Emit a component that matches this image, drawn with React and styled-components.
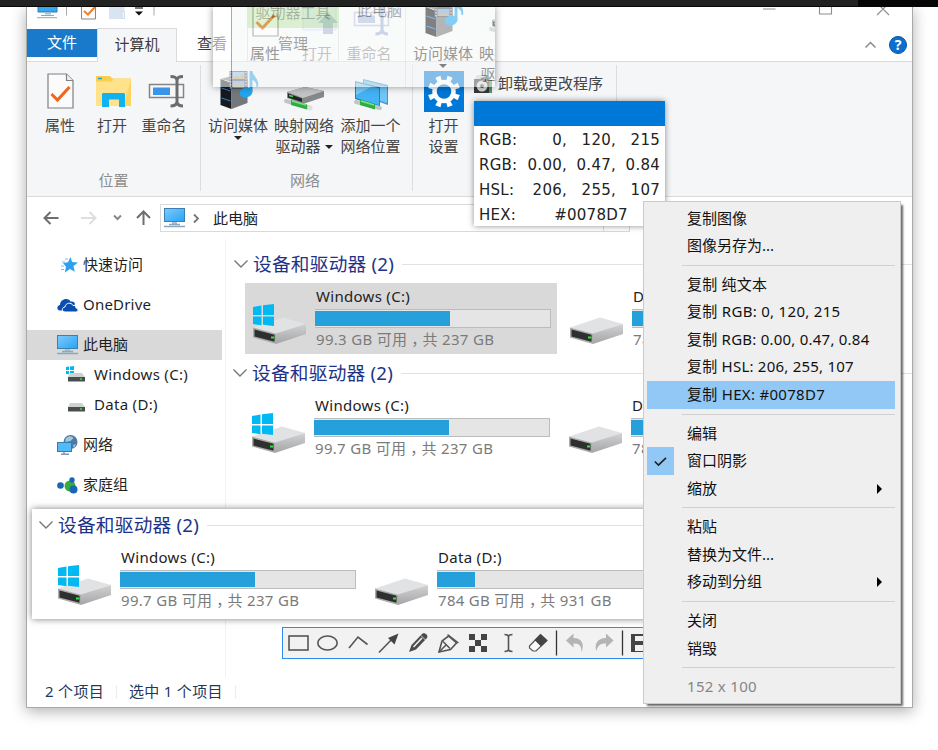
import React from "react";
import styled, { createGlobalStyle } from "styled-components";

const Global = createGlobalStyle`
  *, *::before, *::after { box-sizing: border-box; }
  html, body { margin: 0; height: 750px; overflow: hidden; background: #fff; }
  body { font: 15px/20px "Noto Sans", "Noto Sans CJK SC", sans-serif; color: #1f1f1f; }
  svg { display: block; flex: none; overflow: visible; }
`;

/* ---------- page and window frame ---------- */
const Page = styled.div`
  position: relative;
  width: 938px;
  height: 750px;
  overflow: hidden;
`;
const TopStrip = styled.div`
  position: relative;
  z-index: 2;
  height: 7px;
  display: flex;
  justify-content: flex-end;
  background: #222;
  border-bottom: 1px solid #060606;
`;
const TopStripEnd = styled.div`
  width: 80px;
  background: #060606;
`;
const Window = styled.div`
  display: flex;
  flex-direction: column;
  width: 887px;
  height: 701px;
  margin-left: 26px;
  background: #fff;
  border: 1px solid #a9a9a9;
  border-top: 0;
  box-shadow: 0 3px 14px rgba(0, 0, 0, 0.32);
`;

/* ---------- title and tabs ---------- */
const TitleBar = styled.div`
  display: flex;
  align-items: flex-start;
  height: 21px;
  flex: none;
`;
const QuickBar = styled.div`
  display: flex;
  width: 220px;
  height: 21px;
  padding-left: 10px;
`;
const ContextTitle = styled.div`
  width: 92px;
  height: 21px;
  background: #bfe9a4;
  color: #4c6b38;
  text-align: center;
  line-height: 10px;
`;
const WindowTitle = styled.div`
  margin-left: 18px;
  line-height: 7px;
  color: #555;
  flex: 1;
`;
const Controls = styled.div`
  width: 150px;
`;
const Tabs = styled.div`
  display: flex;
  height: 34px;
  flex: none;
  border-bottom: 1px solid #dadbdc;
`;
const Tab = styled.div`
  width: ${(p) => p.$w}px;
  height: 34px;
  text-align: center;
  line-height: 30px;
  color: #3c3c3c;
`;
const FileTab = styled(Tab)`
  height: 28px;
  margin-top: 1px;
  line-height: 27px;
  background: #1979ca;
  color: #fff;
`;
const ActiveTab = styled(Tab)`
  background: #f5f6f7;
  border: 1px solid #dadbdc;
  border-bottom: 0;
`;
const ManageTab = styled(Tab)`
  border: 1px solid #dfdfdf;
  border-width: 0 1px;
`;
const TabTools = styled.div`
  display: flex;
  align-items: center;
  gap: 13px;
  margin: 0 5px 0 auto;
`;

/* ---------- ribbon ---------- */
const Ribbon = styled.div`
  display: flex;
  height: 135px;
  flex: none;
  background: #f5f6f7;
  border-bottom: 1px solid #dadbdc;
`;
const Group = styled.div`
  display: flex;
  flex-direction: column;
  width: ${(p) => p.$w}px;
  margin: 3px 0 5px;
  padding: 5px 0 0 ${(p) => p.$pad}px;
  border-right: 1px solid #dcdddf;
`;
const GroupRow = styled.div`
  display: flex;
  flex: 1;
`;
const GroupLabel = styled.div`
  height: 22px;
  line-height: 23px;
  text-align: center;
  color: #8d8d8d;
  margin-left: -${(p) => p.$back}px;
`;
const BigButton = styled.div`
  display: flex;
  flex-direction: column;
  align-items: center;
  width: ${(p) => p.$w}px;
  line-height: 21px;
  color: #444;
  white-space: nowrap;
  opacity: ${(p) => (p.$off ? 0.55 : 1)};
`;
const IconBox = styled.div`
  display: flex;
  justify-content: center;
  height: 45px;
`;
const LabelLine = styled.div`
  display: flex;
  align-items: center;
  gap: 4px;
  height: 21px;
`;
const Caret = styled.span`
  border: 4px solid transparent;
  border-top-color: #222;
  border-bottom: 0;
`;
const SmallButton = styled.div`
  display: flex;
  align-items: center;
  gap: 5px;
  height: 28px;
  margin-left: 4px;
  color: #444;
  white-space: nowrap;
`;
const SmallText = styled.span`
  padding-bottom: 2px;
`;

/* ---------- navigation row ---------- */
const NavRow = styled.div`
  display: flex;
  align-items: center;
  height: 43px;
  padding-bottom: 1px;
  flex: none;
`;
const NavButtons = styled.div`
  width: 133px;
`;
const Address = styled.div`
  display: flex;
  align-items: center;
  width: 470px;
  height: 28px;
  padding-left: 3px;
  border: 1px solid #d9d9d9;
  color: #222;
`;
const Crumb = styled.div`
  margin: 0 14px 0 9px;
`;
const AddressText = styled.span`
  padding-bottom: 1px;
  flex: 1;
`;
const RefreshCell = styled.div`
  width: 26px;
  height: 26px;
  border-left: 1px solid #d9d9d9;
`;

/* ---------- body ---------- */
const Body = styled.div`
  display: flex;
  flex: 1;
`;
const Sidebar = styled.div`
  width: 199px;
  padding: 10px 3px 0 0;
  border-right: 1px solid #f1f1f1;
`;
const SideItem = styled.div`
  display: flex;
  align-items: center;
  height: 30px;
  margin-bottom: ${(p) => p.$gap || 0}px;
  padding-left: ${(p) => (p.$nested ? 39 : 30)}px;
  background: ${(p) => (p.$selected ? "#d9d9d9" : "transparent")};
  letter-spacing: ${(p) => p.$ls || 0}px;
  white-space: nowrap;
`;
const SideIcon = styled.div`
  width: ${(p) => (p.$nested ? 28 : 26)}px;
  padding-left: ${(p) => p.$inset || 0}px;
`;
const SideText = styled.span`
  padding-bottom: 2px;
`;
const Main = styled.div`
  flex: 1;
  min-width: 0;
  padding-top: 5px;
  overflow: hidden;
`;
const Section = styled.div`
  margin-left: ${(p) => (p.$shift ? -1 : 0)}px;
`;
const SectionHead = styled.div`
  display: flex;
  align-items: center;
  height: 38px;
  padding-left: 8px;
  color: #1e3287;
  font-size: 18.7px;
  white-space: nowrap;
`;
const SectionName = styled.span`
  margin: 0 8px 1px 5px;
  letter-spacing: 0.22px;
`;
const Rule = styled.div`
  flex: 1;
  height: 1px;
  margin-top: 1px;
  background: #e2e2e2;
`;
const Cards = styled.div`
  display: flex;
  gap: 5px;
  padding-left: 19px;
`;
const Card = styled.div`
  display: flex;
  flex: none;
  width: 312px;
  height: 71px;
  padding: 4px 6px 0 8px;
  background: ${(p) => (p.$selected ? "#d9d9d9" : "transparent")};
`;
const DriveArt = styled.div`
  width: 62px;
  padding-top: 17px;
`;
const DriveInfo = styled.div`
  width: 236px;
  white-space: nowrap;
`;
const DriveName = styled.div`
  height: 22px;
  padding-left: 1px;
  line-height: 18px;
  letter-spacing: 0.3px;
  color: #222;
`;
const Meter = styled.div`
  height: 19px;
  padding: 1px 1px 1px 0;
  background: #e5e5e5;
  border: 1px solid #bcbcbc;
  border-left-width: 0;
`;
const MeterFill = styled.div`
  height: 100%;
  background: #26a0da;
`;
const DriveSpace = styled.div`
  height: 24px;
  padding-left: 1px;
  line-height: 22px;
  letter-spacing: 0.3px;
  color: #7b7b7b;
`;
const Comma = styled.span`
  margin: 0 -4px 0 4px;
`;
const Status = styled.div`
  display: flex;
  align-items: center;
  height: 30px;
  flex: none;
  padding-left: 18px;
  color: #1e395b;
`;
const StatusItem = styled.div`
  height: 14px;
  line-height: 12px;
  letter-spacing: 0.3px;
  padding-right: 12px;
  margin-right: 12px;
  border-right: 1px solid #ececec;
`;

/* ---------- floating pieces ---------- */
const Snippet = styled.div`
  position: absolute;
  left: 32px;
  top: 509px;
  width: 640px;
  height: 110px;
  background: #fff;
  box-shadow: 0 0 7px rgba(0, 0, 0, 0.5);
`;
const SnippetInner = styled.div`
  height: 110px;
  overflow: hidden;
`;
const SnippetBody = styled.div`
  margin-top: -3px;
`;
const Ghost = styled.div`
  position: absolute;
  left: 213px;
  top: 7px;
  width: 282px;
  height: 80px;
  opacity: 0.55;
  background: #fff;
  box-shadow: 0 0 7px rgba(0, 0, 0, 0.75);
`;
const GhostClip = styled.div`
  height: 80px;
  padding-left: 18px;
  overflow: hidden;
`;
const GhostRibbon = styled(Ribbon)`
  width: 640px;
  margin-top: -17px;
  border-left: 1px solid #1979ca;
`;
const Tip = styled.div`
  position: absolute;
  left: 474px;
  top: 101px;
  width: 191px;
  height: 125px;
  background: #fff;
  box-shadow: 0 0 6px rgba(0, 0, 0, 0.45);
  font: 15px/25px "DejaVu Sans", sans-serif;
  color: #222;
`;
const Swatch = styled.div`
  height: 26px;
  border-bottom: 1px solid #fff;
  background: #0078d7;
`;
const TipRow = styled.div`
  display: grid;
  grid-template-columns: 43px 45px 49px 44px;
  height: 25px;
  padding: 0 0 0 5px;
  line-height: 26px;
  text-align: right;
  letter-spacing: 0.25px;
`;
const TipKey = styled.span`
  text-align: left;
`;
const TipWide = styled.span`
  grid-column: 2 / 5;
  text-align: center;
`;
const Tools = styled.div`
  position: absolute;
  left: 282px;
  top: 627px;
  width: 380px;
  height: 32px;
  background: #f2f2f2;
  border: 1px solid #2e8bef;
`;
const Menu = styled.div`
  position: absolute;
  left: 643px;
  top: 201px;
  width: 258px;
  height: 503px;
  padding: 3px 5px 0 3px;
  background: #efefef;
  border: 1px solid #cacaca;
  box-shadow: 3px 3px 2px -1px rgba(0, 0, 0, 0.6);
  color: #111;
  overflow: hidden;
`;
const MenuItem = styled.div`
  display: flex;
  align-items: center;
  height: 27.5px;
  background: ${(p) => (p.$hot ? "#91c8f6" : "transparent")};
  color: ${(p) => (p.$dim ? "#868686" : "inherit")};
  letter-spacing: ${(p) => p.$ls || 0}px;
  white-space: nowrap;
`;
const MenuGutter = styled.div`
  display: flex;
  align-items: center;
  justify-content: center;
  width: 27px;
  height: 27.5px;
  margin-right: 13px;
  background: ${(p) => (p.$on ? "#91c8f6" : "transparent")};
`;
const MenuText = styled.span`
  flex: 1;
  padding-bottom: 2px;
`;
const SubArrow = styled.span`
  margin-right: 13px;
  border: 5px solid transparent;
  border-left-color: #000;
  border-right: 0;
`;
const MenuRule = styled.div`
  height: 1px;
  margin: 5px 0 5.2px 35px;
  background: #d0d0d0;
`;

/* ---------- icons ---------- */
const Monitor = () => (
  <svg width="21" height="20" viewBox="0 0 21 20">
    <defs>
      <linearGradient id="scr" x1="0" y1="0" x2="1" y2="1">
        <stop offset="0" stopColor="#7ecbfb" />
        <stop offset="1" stopColor="#27a3f5" />
      </linearGradient>
    </defs>
    <rect x=".5" y=".5" width="20" height="13" fill="url(#scr)" stroke="#3a80b0" />
    <path d="M8 14h5v2H8z" fill="#a9c0d0" />
    <path d="M5 16.500h11M0 18.500h21" stroke="#8ba8bd" strokeWidth="1.300" />
  </svg>
);

const CheckDoc = () => (
  <svg width="27" height="36" viewBox="0 0 27 36">
    <path d="M1 1h18.500l6.500 6.500V35H1z" fill="#fbfbfb" stroke="#808080" strokeWidth="1.200" />
    <path d="M19.500 1v6.500H26" fill="#eee" stroke="#808080" strokeWidth="1.200" />
    <path d="M4.500 21l6 6L22.500 14" fill="none" stroke="#f2641d" strokeWidth="3" />
  </svg>
);

const Folder = () => (
  <svg width="35" height="31" viewBox="0 0 35 31">
    <path d="M0 3l0-3h14l2.500 2.500H35V30H0z" fill="#f8cf4f" />
    <path d="M0 5.500h15L17.500 3H35v27H0z" fill="#ffe28a" />
    <path d="M35 3v27h-7z" fill="#fbcf4d" opacity=".7" />
    <path d="M2 2.500h4" stroke="#2b9fd8" strokeWidth="1.500" />
    <path d="M6 31V18l1-1h21l1 1v13h-6v-7.500H13V31z" fill="#12b2ee" />
  </svg>
);

const OpenUp = () => (
  <svg width="36" height="34" viewBox="0 0 36 34">
    <path d="M0 2h12l3 3h18v25H0z" fill="#dfe8f6" stroke="#b4c4dd" />
    <path d="M25 12l10 11h-5v11H20V23h-5z" fill="#6b87b4" />
  </svg>
);

const Rename = ({ muted }) => (
  <svg width="36" height="34" viewBox="0 0 36 34">
    <rect x="1" y="10.500" width="34" height="13" fill="#f7f7f7" stroke={muted ? "#7e9ac8" : "#858585"} strokeWidth="1.500" />
    <rect x="4.500" y="13.500" width="17" height="7.500" fill={muted ? "#6f8ec4" : "#3a95ea"} />
    <path d="M22 2.500c4 0 6 .5 6.500 4 .5-3.500 2-4 6-4M28.500 5v24M22 32c4 0 6-1 6.500-4 .5 3 2.500 4 6 4" fill="none" stroke={muted ? "#5f7cae" : "#6c6c6c"} strokeWidth="3" />
  </svg>
);

const Media = () => (
  <svg width="39" height="38" viewBox="0 0 39 38">
    <path d="M1 8l15-4 12 4-11 4z" fill="#777" />
    <path d="M1 8l11 4v26L1 34z" fill="#17191c" />
    <path d="M12 12l16-4v24l-16 6z" fill="#74777b" />
    <path d="M2 17l9 3M2 27l9 3" stroke="#247bd1" strokeWidth="1.200" />
    <rect x="10" y="0" width="18" height="18" fill="#505962" />
    <rect x="13" y="1" width="12" height="7" fill="#8fbfe8" />
    <rect x="13" y="10" width="12" height="7" fill="#7da7dc" />
    <path d="M13 8l4-4 3 3 3-4 2 5zM13 17l4-4 3 3 3-2 2 3z" fill="#c8a35b" />
    <path d="M11.500 1v17M26.500 1v17" stroke="#e8edf2" strokeDasharray="1.500 1.500" />
    <ellipse cx="26.500" cy="21.500" rx="6.500" ry="5" fill="#21a7ee" transform="rotate(-15 26.500 21.500)" />
    <path d="M30 21V0h3c0 5 7 7 5.500 16h-1.500c0-4-1.500-6-4-7v12z" fill="#2ba5ea" />
  </svg>
);

const NetDrive = () => (
  <svg width="40" height="24" viewBox="0 0 40 24">
    <path d="M2 5L20 0l19 4v6L18 17 2 11z" fill="#858789" />
    <path d="M2 5L20 0l19 4-21 7z" fill="#c2c4c5" />
    <path d="M3 6.500l14 5V15L3 10.500z" fill="#222" />
    <path d="M4 8.500l4 1" stroke="#46db55" strokeWidth="1.500" />
    <path d="M1 14l7 2 17 5" stroke="#bfc7c4" strokeWidth="4" strokeLinecap="round" />
    <path d="M6 13l16 4.500v5L6 18z" fill="#2dad43" />
    <path d="M7 14l14 4" stroke="#80df86" strokeWidth="1.500" />
    <circle cx="25" cy="21" r="2.500" fill="#dde2df" />
  </svg>
);

const NetPlace = () => (
  <svg width="35" height="31" viewBox="0 0 35 31">
    <path d="M9 0l25 6v20L9 17z" fill="#3d94c8" />
    <path d="M10 1.500l23 5.700v17L10 16z" fill="#71c6f4" />
    <path d="M1 2l25 6v20L1 20z" fill="#2d7fae" />
    <path d="M2 3.500l23 5.700v17L2 19z" fill="#43b3f5" />
    <path d="M2 3.500l16 4L2 16z" fill="#7accf8" />
    <path d="M2 23l24 6" stroke="#bfc7c4" strokeWidth="4" strokeLinecap="round" />
    <path d="M6 20.500l15 4.500v5.500L6 26z" fill="#2dad43" />
    <path d="M7 22l13 4" stroke="#80df86" strokeWidth="1.500" />
  </svg>
);

const teeth = [22.5, 67.5, 112.5, 157.5, 202.5, 247.5, 292.5, 337.5];
const Gear = () => (
  <svg width="40" height="41" viewBox="0 0 40 41">
    <rect width="40" height="41" fill="#0078d7" />
    <circle cx="20" cy="20.500" r="9.500" fill="none" stroke="#fff" strokeWidth="4.500" />
    {teeth.map((a) => (
      <path key={a} d="M17.200 4.500h5.600l-.8 6h-4z" fill="#fff" transform={`rotate(${a} 20 20.500)`} />
    ))}
  </svg>
);

const Uninstall = () => (
  <svg width="19" height="18" viewBox="0 0 19 18">
    <path d="M3 0h10l5 4H1z" fill="#d2d2cf" />
    <rect x="0" y="4" width="15" height="14" fill="#35383a" />
    <path d="M15 5h3v13h-3z" fill="#4b9468" />
    <path d="M12 3l5 2-4 2z" fill="#e5a445" />
    <circle cx="8" cy="11" r="5.500" fill="#d8d8d8" />
    <circle cx="8" cy="11" r="2" fill="#555" />
  </svg>
);

const Drive = ({ windows }) => (
  <svg width="54" height="41" viewBox="0 0 54 41">
    <defs>
      <linearGradient id="side" x1="0" y1="0" x2="0" y2="1">
        <stop offset="0" stopColor="#d2d2d3" />
        <stop offset="1" stopColor="#a4a5a7" />
      </linearGradient>
    </defs>
    <path d="M0 23.500L30 13.500l23 6.500-30 10z" fill="#e1e2e4" />
    <path d="M23 29.500L53 20v10L23 40z" fill="url(#side)" />
    <path d="M0 23.500l23 6.200V40L0 33.500z" fill="#aaa" />
    <path d="M1.500 25.500l20 5.300v7L1.500 32.500z" fill="#2d302f" />
    <path d="M18 33.500h3" stroke="#35e63b" strokeWidth="2" />
    {windows && (
      <path d="M0 3l8.500-1.500V11H0zM10 1.200L21 0v11H10zM0 12.500h8.500v8.700L0 20zM10 12.500h11V22l-11-1.200z" fill="#00b9f2" />
    )}
  </svg>
);

const MiniDrive = ({ windows }) => (
  <svg width="18" height="18" viewBox="0 0 18 18">
    {windows && <path d="M0 1l3-.4V4H0zM4 .5L8 0v4H4zM0 5h3v3.200L0 8zM4 5h4v4l-4-.5z" fill="#00b9f2" />}
    <path d="M4 7h12l3 4H2z" fill="#d0d1d2" />
    <path d="M2 11h17v4.500H2z" fill="#4a4d4e" />
    <path d="M14 13h2" stroke="#35e63b" strokeWidth="1.500" />
  </svg>
);

const Star = () => (
  <svg width="18" height="16" viewBox="0 0 18 16">
    <path d="M10.500 0l1.600 5.100L18 5.500l-4.500 3.600 1.300 5.700L10 12l-5.200 3.500L6 9.700 3 6l5-.7z" fill="#2f9ff0" />
    <path d="M5 2h3M2 5h3M1 9h3M1 12.500h3" stroke="#75c1f4" strokeWidth="1.200" />
  </svg>
);

const OneDrive = () => (
  <svg width="21" height="13" viewBox="0 0 21 13">
    <path d="M5 11.500H3C-1 11 0 6.500 3 6c0-6 8-8 10.500-3.500C17 2 18 4 18 5.500" fill="#0a4fb0" />
    <path d="M8 13c-4-.5-3-5 0-5 .5-4.500 6.500-5 8-1.500 2.500-.5 3 1 3 2.500 3 .5 2.500 4-.5 4z" fill="#0a4fb0" stroke="#fff" strokeWidth="1" />
  </svg>
);

const Network = () => (
  <svg width="21" height="20" viewBox="0 0 21 20">
    <circle cx="13.500" cy="7" r="7" fill="#4d7ba5" />
    <path d="M8.500 4c3-4 6-3 8-1l-3 3-5 1zM16 10l3-1-2 4z" fill="#a5c8e2" />
    <rect x=".5" y="7.500" width="14" height="9" fill="#54b9f8" stroke="#347daf" />
    <path d="M7 17v2M4 19.300h8" stroke="#7c98ad" strokeWidth="1.400" />
  </svg>
);

const HomeGroup = () => (
  <svg width="21" height="17" viewBox="0 0 21 17">
    <circle cx="3.500" cy="8.500" r="3.300" fill="#1767b4" />
    <circle cx="13" cy="9" r="5.500" fill="#38ad3f" />
    <circle cx="15" cy="3" r="2.700" fill="#1767b4" />
    <circle cx="16.500" cy="12.500" r="4" fill="#1767b4" />
  </svg>
);

const QuickIcons = () => (
  <svg width="140" height="12" viewBox="37 7 140 12">
    <path d="M38 5h19v7H38z" fill="#35a8ef" stroke="#2a80b8" />
    <path d="M45 12.500h6v2h-6z" fill="#a9c0d0" />
    <path d="M41 15.500h13M37 17.700h20" stroke="#8ba8bd" />
    <path d="M66.500 7v8.500M154 7v8.500" stroke="#a9a9a9" />
    <path d="M81.500 5v14h14V5" fill="#fbfbfb" stroke="#888" />
    <path d="M84 11l4 3.500 7-7.500" fill="none" stroke="#f2812a" strokeWidth="2" />
    <path d="M109 5v14h15.500V5z" fill="#d9e4f3" />
    <path d="M122 11.500h2.500v7H122z" fill="#eef3fa" stroke="#c5d3e8" strokeWidth=".6" />
    <path d="M135 8h8" stroke="#333" strokeWidth="1.300" />
    <path d="M135 11.500h8l-4 4z" fill="#111" />
  </svg>
);

const ControlIcons = () => (
  <svg width="150" height="12" viewBox="762 7 150 12">
    <path d="M763 9h12.500M819.500 4.500h12v9.500h-12zM877 15l12-12M889 15L877 3" fill="none" stroke="#8d8d8d" strokeWidth="1.100" />
  </svg>
);

const NavIcons = () => (
  <svg width="133" height="28" viewBox="27 204 133 28" fill="none" stroke="#6e6e6e" strokeWidth="2">
    <path d="M58.500 218H45M50.500 212l-6 6 6 6" />
    <path d="M81 218h13.500M89.500 212l6 6-6 6" stroke="#dedede" />
    <path d="M114 215.500l3.500 3.500 3.500-3.500" stroke="#888" />
    <path d="M143.500 225v-13M137 218l6.500-6.500L150 218" />
  </svg>
);

const Chevron = () => (
  <svg width="14" height="8" viewBox="0 0 14 8">
    <path d="M.5.500L7 7 13.500.500" fill="none" stroke="#777" strokeWidth="1.400" />
  </svg>
);

const ToolIcons = () => (
  <svg width="378" height="30" viewBox="283 628 378 30" fill="none" stroke="#555" strokeWidth="1.600">
    <rect x="289" y="636" width="19" height="14" />
    <ellipse cx="327.500" cy="643" rx="9.700" ry="7" />
    <path d="M349 648l9-11 9.500 7.500" />
    <path d="M379 652.500l15-15.500" />
    <path d="M398.500 633.500l-4 11-6.500-6.500z" fill="#444" stroke="none" />
    <path d="M409 652l2.500-7 11-11.500c3-1 6 2 4.500 4.500L416 649.500z" fill="#4b4b4b" stroke="none" />
    <path d="M413.500 647l8.500-9" stroke="#f2f2f2" strokeWidth="1.500" />
    <path d="M421 635.500l4.500 4.500" stroke="#f2f2f2" strokeWidth=".8" />
    <path d="M439 652l3-11 6.500-5 8 7-6 6.500z" />
    <path d="M439 652l7-7M447.500 634.500l11 8.500M443 641.500l7 7" strokeWidth="1.500" />
    <path d="M469 634h6v6h-6zM481 634h6v6h-6zM475 640h6v6h-6zM469 646h6v6h-6zM481 646h6v6h-6z" fill="#444" stroke="none" />
    <path d="M504.500 634.500c2.500 0 4 .5 4 2.500 0-2 1.500-2.500 4-2.500M508.500 636v14M504.500 651.500c2.500 0 4-.5 4-2.500 0 2 1.500 2.500 4 2.500" />
    <path d="M529.500 646l11-11.500 6.500 6-11 10.500h-3l-3.500-3z" fill="#fafafa" strokeWidth="1.200" />
    <path d="M540.500 634l6.800 6.500-6.300 6-6.500-6.500z" fill="#444" stroke="none" />
    <path d="M556.500 630.500v25M622.500 630.500v25" stroke="#333" strokeWidth="1.300" />
    <path d="M566 640.500l7.500-7v4.500c9 0 11 7 8 14.500.5-6-2-9.500-8-9v4z" fill="#b4b4b4" stroke="none" />
    <path d="M613.500 640.500l-7.500-7v4.500c-9 0-12 7-9.500 13 1-5 3.500-8 9.500-7.500v4z" fill="#b4b4b4" stroke="none" />
    <path d="M631 634h20v18h-20zM635 636v5h12v-5zM635 645v6h12v-6z" fill="#444" fillRule="evenodd" stroke="none" />
  </svg>
);

/* ---------- composed parts ---------- */
const BigBtn = ({ w, icon, at, lines, caret, off }) => (
  <BigButton $w={w} $off={off}>
    <IconBox>
      <svg width="41" height="45" viewBox="0 0 41 45">
        <g transform={`translate(${at[0]} ${at[1]})`}>{icon}</g>
      </svg>
    </IconBox>
    {lines.map((t, i) => (
      <LabelLine key={t}>
        {t}
        {caret === "inline" && i === lines.length - 1 && <Caret />}
      </LabelLine>
    ))}
    {caret === "below" && <Caret />}
  </BigButton>
);

const RibbonGroups = ({ ghost }) => (
  <>
    <Group $w={174} $pad={7}>
      <GroupRow>
        <BigBtn w={52} icon={<CheckDoc />} at={[7, 3]} lines={["属性"]} />
        <BigBtn w={52} off={ghost} icon={ghost ? <OpenUp /> : <Folder />} at={ghost ? [6, 2] : [4, 6]} lines={["打开"]} />
        <BigBtn w={52} off={ghost} icon={<Rename muted={ghost} />} at={[4.5, 4]} lines={["重命名"]} />
      </GroupRow>
      <GroupLabel $back={7}>位置</GroupLabel>
    </Group>
    <Group $w={212} $pad={4}>
      <GroupRow>
        <BigBtn w={66} icon={<Media />} at={[1.5, 1]} lines={["访问媒体"]} caret="below" />
        <BigBtn w={66} icon={<NetDrive />} at={[1, 17]} lines={["映射网络", "驱动器"]} caret="inline" />
        <BigBtn w={67} icon={<NetPlace />} at={[4, 9]} lines={["添加一个", "网络位置"]} />
      </GroupRow>
      <GroupLabel $back={7}>网络</GroupLabel>
    </Group>
    <Group $w={204} $pad={4}>
      <GroupRow>
        <BigBtn w={53} icon={<Gear />} at={[1, 1]} lines={["打开", "设置"]} />
        <SmallButton>
          <Uninstall />
          <SmallText>卸载或更改程序</SmallText>
        </SmallButton>
      </GroupRow>
    </Group>
  </>
);

const DriveCard = ({ name, free, total, fill, windows, selected }) => (
  <Card $selected={selected}>
    <DriveArt>
      <Drive windows={windows} />
    </DriveArt>
    <DriveInfo>
      <DriveName>{name}</DriveName>
      <Meter>
        <MeterFill style={{ width: `${fill}%` }} />
      </Meter>
      <DriveSpace>
        {free} GB 可用<Comma>，</Comma>共 {total} GB
      </DriveSpace>
    </DriveInfo>
  </Card>
);

const DriveSection = ({ free, dFree = "784", selected, shift }) => (
  <Section $shift={shift}>
    <SectionHead>
      <Chevron />
      <SectionName>设备和驱动器 (2)</SectionName>
      <Rule />
    </SectionHead>
    <Cards>
      <DriveCard windows selected={selected} name="Windows (C:)" free={free} total="237" fill={57.7} />
      <DriveCard name="Data (D:)" free={dFree} total="931" fill={16.3} />
    </Cards>
  </Section>
);

const sideItems = [
  { text: "快速访问", icon: <Star />, gap: 10, inset: 3 },
  { text: "OneDrive", icon: <OneDrive />, gap: 10, ls: 0.2 },
  { text: "此电脑", icon: <Monitor />, selected: true },
  { text: "Windows (C:)", icon: <MiniDrive windows />, nested: true, ls: 0.3 },
  { text: "Data (D:)", icon: <MiniDrive />, nested: true, gap: 10, ls: 0.3 },
  { text: "网络", icon: <Network />, gap: 10 },
  { text: "家庭组", icon: <HomeGroup /> },
];

const menuItems = [
  { text: "复制图像" },
  { text: "图像另存为..." },
  null,
  { text: "复制 纯文本", ls: 0.2 },
  { text: "复制 RGB: 0, 120, 215", ls: 0.3 },
  { text: "复制 RGB: 0.00, 0.47, 0.84", ls: 0.23 },
  { text: "复制 HSL: 206, 255, 107", ls: 0.23 },
  { text: "复制 HEX: #0078D7", ls: 0.3, hot: true },
  null,
  { text: "编辑" },
  { text: "窗口阴影", checked: true },
  { text: "缩放", sub: true },
  null,
  { text: "粘贴" },
  { text: "替换为文件..." },
  { text: "移动到分组", sub: true },
  null,
  { text: "关闭" },
  { text: "销毁" },
  null,
  { text: "152 x 100", dim: true, ls: 0.3 },
];

const tipRows = [
  ["RGB:", "0,", "120,", "215"],
  ["RGB:", "0.00,", "0.47,", "0.84"],
  ["HSL:", "206,", "255,", "107"],
];

export default function App() {
  return (
    <Page>
      <Global />
      <TopStrip>
        <TopStripEnd />
      </TopStrip>
      <Window>
        <TitleBar>
          <QuickBar>
            <QuickIcons />
          </QuickBar>
          <ContextTitle>驱动器工具</ContextTitle>
          <WindowTitle>此电脑</WindowTitle>
          <Controls>
            <ControlIcons />
          </Controls>
        </TitleBar>
        <Tabs>
          <FileTab $w={70}>文件</FileTab>
          <ActiveTab $w={80}>计算机</ActiveTab>
          <Tab $w={70}>查看</Tab>
          <ManageTab $w={92}>管理</ManageTab>
          <TabTools>
            <svg width="11" height="6" viewBox="0 0 11 6">
              <path d="M.5 5.500l5-5 5 5" fill="none" stroke="#8a8a8a" strokeWidth="1.500" />
            </svg>
            <svg width="18" height="18" viewBox="0 0 18 18">
              <circle cx="9" cy="9" r="8.500" fill="#0c6fce" stroke="#0856a4" />
              <text x="9" y="14" textAnchor="middle" fontSize="14" fontWeight="700" fill="#fff">?</text>
            </svg>
          </TabTools>
        </Tabs>
        <Ribbon>
          <RibbonGroups />
        </Ribbon>
        <NavRow>
          <NavButtons>
            <NavIcons />
          </NavButtons>
          <Address>
            <Monitor />
            <Crumb>
              <svg width="5" height="9" viewBox="0 0 5 9">
                <path d="M0 .5l4 4-4 4" fill="none" stroke="#777" strokeWidth="1.800" />
              </svg>
            </Crumb>
            <AddressText>此电脑</AddressText>
            <RefreshCell />
          </Address>
        </NavRow>
        <Body>
          <Sidebar>
            {sideItems.map((s) => (
              <SideItem key={s.text} $gap={s.gap} $nested={s.nested} $selected={s.selected} $ls={s.ls}>
                <SideIcon $nested={s.nested} $inset={s.inset}>
                  {s.icon}
                </SideIcon>
                <SideText>{s.text}</SideText>
              </SideItem>
            ))}
          </Sidebar>
          <Main>
            <DriveSection free="99.3" selected />
            <DriveSection free="99.7" shift />
          </Main>
        </Body>
        <Status>
          <StatusItem>2 个项目</StatusItem>
          <StatusItem>选中 1 个项目</StatusItem>
        </Status>
      </Window>

      <Ghost>
        <GhostClip>
          <GhostRibbon>
            <RibbonGroups ghost />
          </GhostRibbon>
        </GhostClip>
      </Ghost>

      <Snippet>
        <SnippetInner>
          <SnippetBody>
            <DriveSection free="99.7" shift />
          </SnippetBody>
        </SnippetInner>
      </Snippet>

      <Tools>
        <ToolIcons />
      </Tools>

      <Tip>
        <Swatch />
        {tipRows.map((r, i) => (
          <TipRow key={i}>
            <TipKey>{r[0]}</TipKey>
            <span>{r[1]}</span>
            <span>{r[2]}</span>
            <span>{r[3]}</span>
          </TipRow>
        ))}
        <TipRow>
          <TipKey>HEX:</TipKey>
          <TipWide>#0078D7</TipWide>
        </TipRow>
      </Tip>

      <Menu>
        {menuItems.map((m, i) =>
          m ? (
            <MenuItem key={i} $hot={m.hot} $dim={m.dim} $ls={m.ls}>
              <MenuGutter $on={m.checked}>
                {m.checked && (
                  <svg width="13" height="9" viewBox="0 0 13 9">
                    <path d="M.8 4.500l3.700 3.500L12 .8" fill="none" stroke="#222" strokeWidth="1.700" />
                  </svg>
                )}
              </MenuGutter>
              <MenuText>{m.text}</MenuText>
              {m.sub && <SubArrow />}
            </MenuItem>
          ) : (
            <MenuRule key={i} />
          )
        )}
      </Menu>
    </Page>
  );
}
